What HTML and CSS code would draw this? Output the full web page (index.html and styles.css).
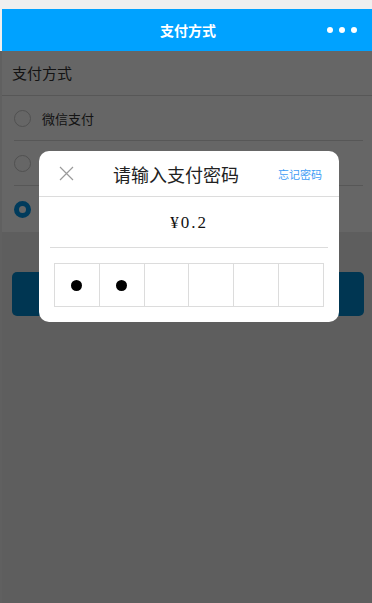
FILE: index.html
```html
<!DOCTYPE html>
<html lang="zh-CN">
<head>
<meta charset="utf-8">
<title>支付方式</title>
<link rel="stylesheet" href="styles.css">
</head>
<body>
<div class="statusbar"></div>
<div class="app">
  <header class="nav">
    <span class="nav-title">支付方式</span>
    <span class="nav-more"><i></i><i></i><i></i></span>
  </header>
  <section class="list">
    <div class="list-head">支付方式</div>
    <div class="row"><span class="radio"></span><span class="label">微信支付</span></div>
    <div class="row"><span class="radio"></span><span class="label">支付宝支付</span></div>
    <div class="row last"><span class="radio checked"></span><span class="label">余额支付</span></div>
  </section>
  <button class="pay-btn">确认支付</button>
</div>

<div class="mask">
  <div class="dialog">
    <div class="dialog-head">
      <svg class="close" width="15" height="15" viewBox="0 0 15 15">
        <path d="M1 1 L14 14 M14 1 L1 14" stroke="#9a9a9a" stroke-width="1.2" fill="none"/>
      </svg>
      <span class="dialog-title">请输入支付密码</span>
      <span class="forget">忘记密码</span>
    </div>
    <div class="amount">¥0.2</div>
    <div class="pwd">
      <span class="cell"><i class="dot"></i></span>
      <span class="cell"><i class="dot"></i></span>
      <span class="cell"></span>
      <span class="cell"></span>
      <span class="cell"></span>
      <span class="cell"></span>
    </div>
  </div>
</div>
</body>
</html>
```

FILE: styles.css
```css
html, body {
  margin: 0;
  padding: 0;
}
body {
  background: #efefef;
  font-family: "Noto Sans CJK SC", "Noto Sans", sans-serif;
  color: #333;
  height: 603px;
  overflow: hidden;
}
.statusbar {
  height: 9px;
}
.app {
  margin-left: 2px;
  background: #ebebeb;
  min-height: 594px;
  display: flex;
  flex-direction: column;
}
.nav {
  height: 42px;
  background: #00a2ff;
  position: relative;
  display: flex;
  align-items: center;
  justify-content: center;
}
.nav-title {
  color: #fff;
  font-size: 14px;
  font-weight: 600;
  margin-left: 2px;
}
.nav-more {
  position: absolute;
  right: 15px;
  top: 18px;
  display: flex;
  gap: 6px;
}
.nav-more i {
  width: 6px;
  height: 6px;
  border-radius: 50%;
  background: #fff;
}
.list {
  background: #fff;
}
.list-head {
  height: 44px;
  line-height: 44px;
  padding-left: 10px;
  font-size: 15px;
  border-bottom: 1px solid #d9d9d9;
}
.row {
  height: 44px;
  margin: 0 9px 0 12px;
  display: flex;
  align-items: center;
  border-bottom: 1px solid #d9d9d9;
}
.row.last {
  border-bottom: none;
  height: 46px;
}
.radio {
  width: 15px;
  height: 15px;
  border: 1px solid #c8c8c8;
  border-radius: 50%;
  background: #fff;
  box-sizing: content-box;
}
.radio.checked {
  width: 7px;
  height: 7px;
  border: 5px solid #0094e6;
}
.label {
  font-size: 13px;
  margin-left: 11px;
}
.pay-btn {
  margin: 40px 8px 0 10px;
  height: 44px;
  border: none;
  border-radius: 5px;
  background: #0088cc;
  color: #fff;
  font-size: 16px;
  font-family: inherit;
}
.mask {
  position: fixed;
  top: 51px;
  left: 0;
  right: 0;
  bottom: 0;
  background: rgba(0, 0, 0, 0.6);
}
.dialog {
  width: 300px;
  margin: 100px 0 0 39px;
  background: #fff;
  border-radius: 10px;
  padding-bottom: 15px;
}
.dialog-head {
  height: 45px;
  border-bottom: 1px solid #dcdcdc;
  display: flex;
  align-items: center;
  padding: 0 17px 0 20px;
}
.close {
  display: block;
}
.dialog-title {
  flex: 1;
  text-align: center;
  font-size: 18px;
  color: #222;
}
.forget {
  font-size: 11px;
  color: #3d9cf5;
}
.amount {
  height: 50px;
  line-height: 52px;
  margin: 0 11px;
  border-bottom: 1px solid #dcdcdc;
  text-align: center;
  font-family: "Liberation Serif", serif;
  font-size: 17px;
  letter-spacing: 2px;
  color: #111;
}
.pwd {
  margin: 15px 0 0 15px;
  width: 270px;
  height: 44px;
  display: flex;
  border: 1px solid #dcdcdc;
  box-sizing: border-box;
}
.cell {
  flex: 1;
  display: flex;
  align-items: center;
  justify-content: center;
  border-left: 1px solid #dcdcdc;
}
.cell:first-child {
  border-left: none;
}
.dot {
  width: 11px;
  height: 11px;
  border-radius: 50%;
  background: #000;
}
```
